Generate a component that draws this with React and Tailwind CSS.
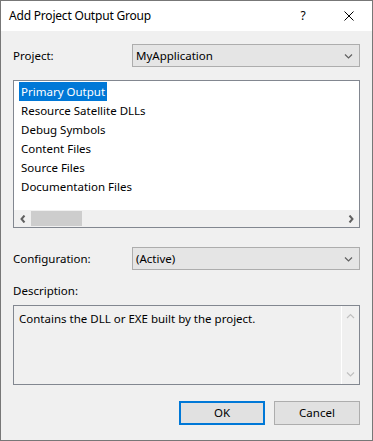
import React from 'react';

const font = { fontFamily: '"Noto Sans", "Liberation Sans", sans-serif' };

const Chevron = ({ dir = 'down', color = '#606060', className = '' }) => {
  const paths = {
    down: 'M1 1.5 L4.5 5 L8 1.5',
    up: 'M1 5 L4.5 1.5 L8 5',
  };
  return (
    <svg width="9" height="6" viewBox="0 0 9 6" className={className}>
      <path d={paths[dir]} fill="none" stroke={color} strokeWidth="1.2" />
    </svg>
  );
};

const SideArrow = ({ dir = 'left' }) => (
  <svg width="6" height="8" viewBox="0 0 6 8">
    <path
      d={dir === 'left' ? 'M4.5 0.5 L1.5 4 L4.5 7.5' : 'M1.5 0.5 L4.5 4 L1.5 7.5'}
      fill="none"
      stroke="#606060"
      strokeWidth="2"
    />
  </svg>
);

const ComboBox = ({ value }) => (
  <div className="w-[228px] h-[23px] border border-[#adadad] bg-[#e5e5e5] flex items-center pl-[3px] pr-[6px]">
    <span className="flex-1 text-black">{value}</span>
    <Chevron />
  </div>
);

const outputs = [
  'Primary Output',
  'Resource Satellite DLLs',
  'Debug Symbols',
  'Content Files',
  'Source Files',
  'Documentation Files',
];

export default function App() {
  return (
    <div
      className="w-[373px] h-[441px] border border-[#777777] bg-[#f0f0f0] flex flex-col text-black text-[11.5px]"
      style={font}
    >
      {/* title bar */}
      <div className="h-[30px] bg-white flex items-center">
        <span className="pl-[8px] flex-1 text-[12px] tracking-[-0.2px]">Add Project Output Group</span>
        <div className="w-[46px] h-full flex items-center justify-center text-[12px]">?</div>
        <div className="w-[46px] h-full flex items-center justify-center">
          <svg width="10" height="10" viewBox="0 0 10 10">
            <path d="M0.5 0.5 L9.5 9.5 M9.5 0.5 L0.5 9.5" stroke="#000" strokeWidth="1" />
          </svg>
        </div>
      </div>

      <div className="px-[12px] flex flex-col">
        <div className="mt-[13px] flex items-center justify-between">
          <span>Project:</span>
          <ComboBox value="MyApplication" />
        </div>

        {/* output list */}
        <div className="mt-[13px] h-[148px] border border-[#828790] bg-white flex flex-col">
          <div className="flex-1 pt-[1px] pl-[5px]">
            {outputs.map((item, i) => (
              <div key={item} className="h-[19px] flex items-center">
                <span
                  className={
                    i === 0
                      ? 'px-[2px] h-[19px] flex items-center bg-[#0078d7] text-white'
                      : 'px-[2px]'
                  }
                >
                  {item}
                </span>
              </div>
            ))}
          </div>
          <div className="h-[17px] bg-[#f0f0f0] flex items-center">
            <div className="w-[17px] flex justify-center">
              <SideArrow dir="left" />
            </div>
            <div className="w-[51px] h-[15px] bg-[#cdcdcd]" />
            <div className="flex-1" />
            <div className="w-[17px] flex justify-center">
              <SideArrow dir="right" />
            </div>
          </div>
        </div>

        <div className="mt-[19px] flex items-center justify-between">
          <span>Configuration:</span>
          <ComboBox value="(Active)" />
        </div>

        <div className="mt-[13px] h-[16px] flex items-center">Description:</div>

        {/* description box */}
        <div className="mt-[6px] h-[80px] border border-[#828790] bg-[#f0f0f0] flex">
          <div className="flex-1 pl-[5px] pt-[4px]">
            Contains the DLL or EXE built by the project.
          </div>
          <div className="w-[18px] border-l border-white flex flex-col items-center justify-between py-[7px]">
            <Chevron dir="up" color="#c0c0c0" />
            <Chevron dir="down" color="#c0c0c0" />
          </div>
        </div>

        <div className="mt-[16px] flex justify-end gap-[9px]">
          <button className="w-[86px] h-[24px] border-2 border-[#0078d7] bg-[#e1e1e1]">
            OK
          </button>
          <button className="w-[86px] h-[24px] border border-[#adadad] bg-[#e1e1e1]">
            Cancel
          </button>
        </div>
      </div>
    </div>
  );
}
